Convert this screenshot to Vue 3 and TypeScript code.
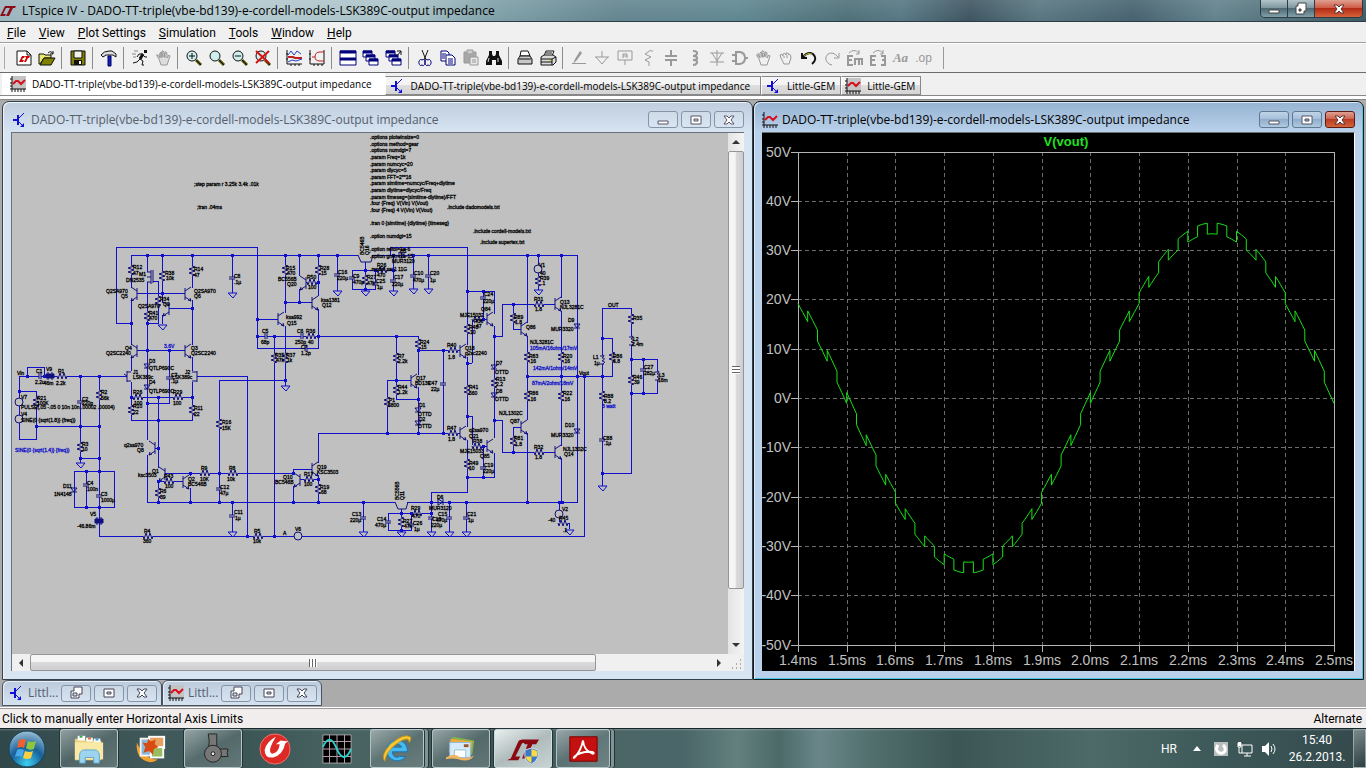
<script setup lang="ts">
type Shape = [d: string, fill: string, stroke?: string, width?: number]
type Tool = { name: string; shapes: Shape[] }

const docTitle = 'DADO-TT-triple(vbe-bd139)-e-cordell-models-LSK389C-output impedance'
const menus = ['File', 'View', 'Plot Settings', 'Simulation', 'Tools', 'Window', 'Help']

const N = 'none'
const K = '#111'
const B = '#00007a'
const G = '#999'

const chartIcon: Shape[] = [
  ['M2 0H16V13H2Z', '#c4c4c4'],
  ['M2 0V16M0 13H16M0 3H2M0 7H2M0 10H2M5 13V16M8 13V16M11 13V16M14 13V16', N, K, 1],
  ['M3 8L6 5H8L11 8L15 4', N, '#d8101c', 2],
]
const bjtIcon: Shape[] = [
  ['M2 7H6V9H2Z', '#1010d8'],
  ['M6 3H8V13H6Z', '#1010d8'],
  ['M8 6L13 1M8 10L13 15', N, '#1010d8', 1],
  ['M13 11V15H9Z', '#1010d8'],
]

const lens: Shape[] = [
  ['M6 1A5 5 0 1 0 6 11A5 5 0 1 0 6 1Z', '#cfeeee', K, 1],
  ['M10 10L15 15', N, '#555500', 3],
  ['M10 10L15 15', N, K, 1],
]
const cascade: Shape[] = [
  ['M0 1H9V7H0Z', '#fff', B, 1], ['M0 2H9', N, B, 3],
  ['M3 5H12V11H3Z', '#fff', B, 1], ['M3 6H12', N, B, 3],
  ['M6 9H15V15H6Z', '#fff', B, 1], ['M6 10H15', N, B, 3],
]
const hand = 'M4 9L2 6Q1 4 3 5L5 8V3Q6 1 7 3V7V1Q8 0 9 2V7L10 2Q11 1 12 3V8L14 5Q16 5 14 9L12 15H6Z'

const toolGroups: Tool[][] = [
  [
    { name: 'New schematic', shapes: [['M1 1H11L15 5V15H1Z', '#fff', K, 1], ['M11 1V5H15', N, K, 1], ['M3 12L6 6H9L8 8H7L6 10H8L7 12ZM9 6H14L13 8H12L10 12H8L10 8Z', '#d00000']] },
    { name: 'Open', shapes: [['M0 4H5L6 5H12V8H5L1 14H0Z', '#e8e870', K, 1], ['M1 15L5 8H16L12 15Z', '#808000', K, 1], ['M9 3Q12 0 14 4M14 1V4H11', N, K, 1]] },
  ],
  [{ name: 'Save', shapes: [['M1 1H15V15H1Z', '#808000', K, 1], ['M4 1H12V8H4Z', '#f2f2e6', K, 1], ['M4 10H12V15H4Z', '#111'], ['M9 11H11V14H9Z', '#fff']] }],
  [{ name: 'Control panel', shapes: [['M0 5Q3 1 8 1H11L15 4V7L12 5H5L2 7Z', '#ddd', K, 1], ['M7 6H10V16H7Z', '#1020c8', '#000060', 1]] }],
  [
    { name: 'Run', shapes: [['M12 0H15V3H12Z', K], ['M11 4L8 9', N, K, 3], ['M8 9L11 11L10 15H12M8 9L5 12L1 13M11 4H7L5 7M11 5L13 7H15', N, K, 1], ['M0 4H4M1 7H4M2 1H6', N, '#888', 1]] },
    { name: 'Halt', shapes: [[hand, '#ddd', G, 1], ['M5 8V3M7 8V2M10 8V3', N, G, 1]] },
  ],
  [
    { name: 'Zoom in', shapes: [...lens, ['M3 6H9M6 3V9', N, K, 1]] },
    { name: 'Zoom area', shapes: lens },
    { name: 'Zoom out', shapes: [...lens, ['M3 6H9', N, K, 1]] },
    { name: 'Zoom full', shapes: [...lens, ['M1 1L14 13M14 1L1 13', N, '#d81010', 2]] },
  ],
  [
    { name: 'Autorange', shapes: [['M1 0V14H16M0 4H2M0 9H2M5 14V16M9 14V16M13 14V16', N, K, 1], ['M2 5L5 1L8 5L11 1L15 4', N, '#2040c0', 1], ['M2 7H7L9 8H16', N, '#c02020', 2], ['M2 12L6 10L10 11L16 9', N, '#2040c0', 1]] },
    { name: 'Pick traces', shapes: [['M1 0V14H15V0M0 4H2M0 9H2M5 14V16M9 14V16M13 14V16', N, K, 1], ['M15 2H11Q6 2 6 7Q6 11 11 11H15M6 7H3', N, '#c02020', 1]] },
  ],
  [
    { name: 'Tile', shapes: [['M0 1H16V15H0Z', '#fff', B, 1], ['M0 2H16M0 9H16', N, B, 3]] },
    { name: 'Cascade', shapes: cascade },
    { name: 'Close all', shapes: [...cascade, ['M11 6L15 1M11 1H15V5', N, K, 1]] },
  ],
  [
    { name: 'Cut', shapes: [['M5 0L9 10M11 0L7 10', N, K, 1], ['M5 10A2 3 0 1 0 5 15A2 3 0 1 0 5 10ZM11 10A2 3 0 1 0 11 15A2 3 0 1 0 11 10Z', N, B, 1]] },
    { name: 'Copy', shapes: [['M1 1H7L9 3V11H1Z', '#fff', B, 1], ['M6 5H12L15 8V15H6Z', '#fff', B, 1], ['M2 4H6M2 6H5M2 8H5M8 9H13M8 11H13M8 13H13', N, B, 1]] },
    { name: 'Paste', shapes: [['M1 2H13V13H1Z', '#a8a8a8', G, 1], ['M4 0H10V4H4Z', '#ccc', G, 1], ['M7 7H15V15H7Z', '#e6e6e6', G, 1], ['M9 10H13M9 12H13', N, G, 1]] },
    { name: 'Find', shapes: [['M3 1H6V4L7 6H9L10 4V1H13V5L16 11V15H10V10H6V15H0V11L3 5Z', K], ['M3 8L2 12M12 8V12', N, '#ddd', 1]] },
  ],
  [
    { name: 'Print preview', shapes: [['M4 1H11L13 6H3Z', '#fff', K, 1], ['M3 6H13L15 9V14H1V9Z', '#c8c8c8', K, 1], ['M2 9H14', N, K, 1]] },
    { name: 'Print', shapes: [['M6 1H14L12 6H4Z', '#fff', K, 1], ['M1 7L4 5H13L16 7V12L13 15H1Z', '#ddd', K, 1], ['M1 9H12L16 7M1 12H12M12 9V15M6 3H12', N, K, 1], ['M9 10H11V11H9Z', '#dd0']] },
  ],
  [
    { name: 'Wire', shapes: [['M2 14L4 9L9 1L11 3L6 10ZM1 13H15V14H1Z', G]] },
    { name: 'Ground', shapes: [['M8 1V7M1 7H15M2 7L8 14L14 7', N, G, 1]] },
    { name: 'Label net', shapes: [['M1 1H15V10H1ZM8 10V15', N, G, 1], ['M6 8V4H10V8M6 6H10', N, G, 1]] },
    { name: 'Resistor', shapes: [['M11 0L5 4L11 7L5 10L9 12V16M11 1H13', N, G, 1]] },
    { name: 'Capacitor', shapes: [['M8 0V6M8 10V16M2 6H14M2 10H14', N, G, 2]] },
    { name: 'Inductor', shapes: [['M7 1Q12 1 11 4Q10 6 7 6Q12 6 11 9Q10 10 7 10Q12 10 11 13Q10 15 7 15', N, G, 2]] },
    { name: 'Diode', shapes: [['M1 3H15M1 12H15M8 0V16M3 3L8 11L13 3', N, G, 1]] },
    { name: 'Component', shapes: [['M0 5H3M0 11H3M13 8H16M4 2H8Q13 3 13 8Q13 13 8 14H4Z', N, G, 2]] },
    { name: 'Move', shapes: [[hand, N, G, 1], ['M5 8L3 3M8 8L7 3M10 7L11 3', N, G, 1]] },
    { name: 'Drag', shapes: [['M3 8L2 5Q4 3 5 6V4Q7 2 8 5V3Q10 2 11 5V4Q13 4 13 8L11 14H6Z', N, G, 1], ['M6 8V6M9 8V5', N, G, 1]] },
    { name: 'Undo', shapes: [['M1 3V8H6', N, K, 2], ['M2 7Q7 1 12 4Q17 9 11 14', N, K, 2], ['M3 6Q7 2 11 4', N, '#b8b830', 1]] },
    { name: 'Redo', shapes: [['M15 3V8H10M14 7Q9 1 4 4Q-1 9 5 14L8 15', N, G, 1]] },
    { name: 'Rotate', shapes: [['M2 3Q7 -2 12 3M12 0V4H9', N, G, 1], ['M6 6H1V15H6M1 10H5M8 15V9H15V15M12 9V15', N, G, 2]] },
    { name: 'Mirror', shapes: [['M3 3Q8 -2 13 3M13 0V4H10', N, G, 1], ['M6 6H1V15H6M1 10H5M11 6H15V15H11M15 10H12', N, G, 2]] },
    { name: 'Text', shapes: [] },
    { name: 'SPICE directive', shapes: [] },
  ],
]

const letters: Record<string, string> = { Text: 'Aa', 'SPICE directive': '.op' }

const tabs = [
  { text: docTitle, icon: chartIcon, active: true },
  { text: docTitle, icon: bjtIcon, active: false },
  { text: 'Little-GEM', icon: bjtIcon, active: false },
  { text: 'Little-GEM', icon: chartIcon, active: false },
]

/* Schematic */
const wires = [
  'M131 323H116V247H257V348H318V309M131 255H358M372 255H577V502H407M131 255V288M131 300V345M131 357V371M131 382V420H192V382',
  'M137 293H185M137 350H185M147 255V272M147 282V440M147 455V502H395M147 323H158V281H153M162 255V303M169 308H192M162 315V324',
  'M192 255V288M192 300V345M192 357V371M131 397H192M158 397V468M155 448H158M147 403H169V350M232 255V293M232 502V532',
  'M19 376H127M27 376V367H44V376M19 376V439H36V391H19M36 426H99M80 376V463M80 458H99M99 376V536H584V376M74 471H114V507H74ZM86 471V507',
  'M197 376H247V536M219 502V380H285M165 473H293V469H312M158 480V502M158 481H183M190 473V476M190 488V502',
  'M285 255V313M285 326V386M257 319H278M299 255V276M299 289V302M306 282H318M285 302H312M318 255V296M257 336H418V375M274 336V536',
  'M337 255V291M365 262V291M352 289V270H393M352 289H375V270M393 255V291M390 255V247H467V345M413 255V289M428 255V289',
  'M467 291H494V314M483 291V319M472 363V319H487M467 363H472M494 326V438M494 336H502V304H555M418 350H460M467 357V427M443 350V433',
  'M396 336V399H418M387 433V380H411M418 387V433M318 463V433H460M467 440V492H431V532M467 477H494V453M467 416H472V446H487M483 446V477',
  'M494 420H502V452H555M293 486V502M300 479H318M318 475V502M363 502V532M401 509V532M388 530V513H431M388 530H411V513M449 502V532M466 502V532',
  'M527 255V323M527 336V420M527 433V502M513 304V329H521M513 452V427H521M538 255V290M561 255V298M561 311V446M561 458V502',
  'M527 376H612V338H602M631 308V473H602M602 308H631M602 308V487M631 359H657V393H631M643 359V393M559 502V523M569 523V529M559 523H569',
].join('')

const nodes: number[][] = [
  [147,255],[162,255],[192,255],[232,255],[285,255],[299,255],[318,255],[337,255],[393,255],[413,255],[428,255],[527,255],[538,255],[561,255],
  [162,293],[192,308],[131,323],[147,323],[147,350],[169,350],[131,397],[158,397],[192,397],[158,420],[147,403],[158,448],[19,391],[27,376],[44,376],[80,376],[99,376],
  [36,426],[80,426],[99,426],[80,458],[99,458],[99,471],[86,471],[86,507],[99,507],[158,481],[190,473],[219,473],[158,502],[190,502],[219,502],[232,502],[247,536],
  [257,319],[257,336],[274,336],[285,302],[299,302],[318,282],[318,336],[396,336],[365,270],[375,270],[393,270],[365,289],[467,291],[483,291],[483,319],[494,336],[467,363],
  [418,350],[443,350],[396,380],[418,399],[387,433],[418,433],[443,433],[285,380],[467,416],[467,477],[483,477],[483,446],[494,420],[513,452],[513,304],[293,473],[318,479],
  [293,502],[318,502],[363,502],[431,502],[449,502],[466,502],[401,513],[411,513],[431,513],[401,530],[527,376],[561,376],[577,376],[584,376],[602,376],[602,338],[631,359],
  [643,359],[631,393],[643,393],[527,502],[559,502],[562,502],[602,473],[274,536],
]
const resV: number[][] = [
  [131,270],[162,276],[192,271],[147,316],[158,301],[36,402],[99,395],[131,410],[192,410],[80,447],[158,493],[219,424],[285,270],[318,270],[274,358],[285,358],[365,280],
  [396,358],[396,390],[387,402],[418,344],[467,329],[467,390],[467,464],[494,383],[318,489],[401,522],[513,318],[527,357],[561,357],[527,396],[561,396],[513,441],
  [538,281],[602,396],[612,357],[631,319],[631,380],
]
const resH: number[][] = [
  [62,376],[138,397],[178,397],[169,481],[205,473],[233,473],[148,536],[258,536],[312,282],[311,336],[382,270],[453,350],[453,433],[477,319],[477,446],[309,479],[417,513],
  [539,304],[539,452],[563,523],
]
const caps: number[][] = [
  [169,378],[232,278],[80,402],[86,485],[99,496],[219,489],[232,516],[337,275],[352,278],[375,284],[393,281],[413,276],[428,276],[483,298],[443,384],[483,468],[363,518],
  [388,522],[411,525],[431,518],[449,518],[466,518],[643,370],[602,440],
]
const capsH: number[][] = [[40,376],[266,336],[302,336],[306,348]]
const diodes: number[][] = [[147,366],[147,387],[74,490],[418,410],[418,423],[494,367],[494,395],[577,326],[577,431]]
const inductors: number[][] = [[602,360],[631,341],[657,376]]
const grounds: number[][] = [
  [162,325],[232,293],[80,463],[232,532],[285,386],[337,291],[365,291],[393,291],[413,289],[428,289],[538,290],[363,532],[401,532],[431,532],[449,532],[466,532],[602,486],[569,530],
]
/* base bar x, centre y, side of the collector and emitter leads */
const bjts: number[][] = [
  [137,294,-1],[185,294,1],[137,351,-1],[185,351,1],[169,309,-1],[155,448,-1],[165,474,-1],[183,482,1],[278,319,1],[306,283,-1],[312,303,1],[460,351,1],[460,433,1],[487,319,1],
  [487,446,1],[411,381,1],[312,469,1],[300,480,-1],[521,329,1],[555,304,1],[521,427,1],[555,452,1],
]
const sources: number[][] = [[19,402],[19,419],[298,536],[538,269],[559,514]]
const flats: number[][] = [[50,376],[99,521]]

const labels: [number, number, string][] = [
  [370,139,'.options plotwinsize=0'],[370,146,'.options method=gear'],[370,152,'.options numdgt=7'],[370,159,'.param Freq=1k'],[370,166,'.param numcyc=20'],[370,172,'.param dlycyc=5'],
  [370,179,'.param FFT=2**16'],[370,185,'.param simtime=numcyc/Freq+dlytime'],[370,192,'.param dlytime=dlycyc/Freq'],[370,199,'.param timeseg=(simtime-dlytime)/FFT'],
  [370,205,'.four {Freq} V(Vin) V(Vout)'],[370,212,'.four {Freq} 4 V(Vin) V(Vout)'],[370,225,'.tran 0 {simtime} {dlytime} {timeseg}'],[370,238,'.option numdgt=15'],
  [370,251,'.option reltol=1e-6'],[370,258,'.option gmin=1e-15'],[370,271,'.model sw 1 11G'],[447,209,'.include dadomodels.txt'],[473,233,'.include cordell-models.txt'],[480,244,'.include supertex.txt'],
  [194,186,';step param r 3.25k 3.4k .01k'],[197,209,';tran .04ms'],
  [133,269,'R12'],[133,275,'47'],[139,276,'M1'],[126,282,'DN2535'],[165,275,'R38'],[166,280,'10k'],[194,271,'R14'],[194,277,'47'],[106,293,'Q2SA970'],[121,298,'Q5'],
  [194,293,'Q2SA970'],[194,298,'Q6'],[160,301,'R34'],[163,306,'Q9'],[138,308,'Q2SA970'],[149,315,'R41'],[149,320,'470'],[234,278,'C8'],[234,284,'.1µ'],
  [125,350,'Q4'],[106,355,'Q2SC2240'],[191,350,'Q3'],[191,355,'Q2SC2240'],[149,363,'D3'],[149,370,'QTLP690C'],[133,374,'J1'],[133,379,'LSK389c'],[172,379,'LSK389c'],[185,374,'J2'],
  [171,377,'C7'],[171,383,'.1µ'],[149,384,'D4'],[149,393,'QTLP690C'],[133,394,'R26'],[134,405,'100'],[173,394,'R29'],[173,405,'100'],[133,408,'R10'],[133,414,'22'],[194,410,'R11'],[194,416,'22'],
  [17,375,'Vin'],[36,373,'C1'],[46,371,'V9'],[58,373,'R1'],[35,384,'2.2u'],[42,385,'-46m'],[56,385,'2.2k'],[37,400,'R21'],[37,405,'100K'],[21,399,'V7'],[21,409,'PULSE(.05 -.05 0 10n 10n .00002 .00004)'],
  [21,416,'V4'],[21,422,'SINE(0 {sqrt(1.8)} {freq})'],[82,401,'C2'],[82,405,'220p'],[101,394,'R2'],[101,400,'56k'],[82,446,'R3'],[82,451,'10'],
  [63,488,'D11'],[54,496,'1N4148'],[87,485,'C4'],[87,491,'100n'],[101,496,'C3'],[101,502,'1000µ'],[90,516,'V5'],[77,528,'-46.86m'],[144,533,'R4'],[143,543,'360'],
  [124,447,'q2sa970'],[137,452,'Q8'],[152,473,'Q1'],[138,477,'ksc3503'],[164,478,'R43'],[165,488,'100'],[188,481,'Q2'],[188,486,'BC546B'],[160,493,'R6'],[160,499,'39'],
  [201,470,'R9'],[200,481,'10K'],[229,470,'R8'],[227,481,'10k'],[222,424,'R16'],[222,430,'15K'],[220,489,'C12'],[220,495,'47µ'],[234,514,'C11'],[235,520,'1µ'],
  [254,533,'R5'],[253,543,'10k'],[283,535,'A'],[295,531,'V6'],[286,270,'R15'],[287,275,'470'],[278,281,'BC556B'],[287,286,'Q20'],[307,279,'R50'],[308,289,'100'],
  [320,270,'R28'],[321,275,'15'],[321,302,'ksa1381'],[322,307,'Q12'],[286,319,'ksa992'],[287,325,'Q15'],[262,333,'C5'],[261,344,'68p'],[297,333,'C6'],[306,333,'R36'],[295,344,'250p'],[308,344,'40'],
  [301,349,'C7'],[301,355,'1.2p'],[275,357,'R35'],[286,357,'R37'],[276,362,'47k'],[287,362,'1k'],[338,274,'C16'],[337,280,'220µ'],[353,278,'C9'],[353,284,'470µ'],[367,279,'R27'],[367,285,'47k'],
  [376,283,'C25'],[377,289,'1µ'],[377,267,'R26'],[377,277,'470'],[394,279,'C17'],[392,286,'220µ'],[392,263,'MUR3120'],[400,253,'D5'],[414,275,'C10'],[413,282,'470µ'],[430,275,'C20'],[430,282,'1µ'],
  [398,358,'R7'],[398,363,'2.2k'],[420,344,'R24'],[421,349,'15'],[447,347,'R40'],[448,359,'1.8'],[465,350,'Q18'],[465,355,'q2sc2240'],[469,329,'R48'],[470,334,'10'],
  [484,296,'C24'],[483,303,'220µ'],[481,311,'Q84'],[460,317,'MJE15032'],[474,323,'R30'],[476,328,'47'],[398,389,'R44'],[398,394,'1.2k'],[416,380,'Q17'],[415,385,'BD139'],[428,385,'C47'],[431,391,'22µ'],
  [389,402,'P1'],[388,407,'5800'],[419,407,'D1'],[418,416,'OTTD'],[419,421,'D2'],[418,428,'OTTD'],[469,389,'R41'],[469,395,'560'],[447,430,'R47'],[448,441,'1.8'],
  [469,432,'q2sa970'],[469,438,'Q21'],[473,443,'R38'],[460,453,'MJE15033'],[480,458,'Q85'],[469,465,'R49'],[469,470,'10'],[484,467,'C19'],[483,473,'220µ'],
  [496,365,'D7'],[495,374,'OTTD'],[496,381,'R13'],[496,386,'2.2'],[496,393,'D8'],[495,401,'OTTD'],[317,469,'Q19'],[317,474,'KSC3503'],[283,479,'Q10'],[275,484,'BC546B'],[304,476,'R17'],[304,486,'100'],
  [320,489,'R19'],[321,494,'68'],[352,516,'C13'],[350,522,'220µ'],[377,521,'C14'],[375,527,'470µ'],[403,523,'R27'],[404,528,'47k'],[411,510,'R29'],[412,518,'470'],[413,525,'C26'],[414,531,'1µ'],
  [437,499,'D6'],[429,510,'MUR3120'],[432,521,'C18'],[431,527,'220µ'],[438,516,'C15'],[436,522,'470µ'],[467,516,'C21'],[468,522,'1µ'],[539,267,'V1'],[540,275,'40'],[540,280,'R39'],[541,285,'.1'],
  [534,301,'R31'],[535,311,'1.8'],[560,304,'Q13'],[560,309,'NJL3281C'],[514,319,'R89'],[515,324,'1.8'],[526,329,'Q86'],[530,344,'NJL3281C'],[568,322,'D9'],[551,331,'MUR3320'],
  [529,358,'R83'],[529,363,'.16'],[563,358,'R20'],[563,363,'.16'],[529,395,'R86'],[529,401,'.16'],[563,395,'R22'],[563,401,'.16'],[579,375,'Vout'],[593,359,'L1'],[594,365,'1µ'],[613,358,'R86'],[613,363,'6.8'],
  [608,307,'OUT'],[633,320,'R35'],[633,341,'L2'],[632,346,'2.4m'],[633,379,'R46'],[634,384,'39'],[644,369,'C27'],[644,375,'282µ'],[659,377,'L3'],[658,382,'16m'],[604,398,'R88'],[604,403,'8.2'],
  [603,440,'C88'],[604,445,'.1µ'],[499,415,'NJL1302C'],[510,423,'Q87'],[514,440,'R81'],[515,446,'1.8'],[534,449,'R32'],[535,459,'1.8'],[565,427,'D10'],[551,437,'MUR3320'],[563,451,'NJL1302C'],[564,456,'Q14'],
  [562,511,'V2'],[548,522,'-40'],[559,520,'R45'],[563,532,'.1'],
]
const blueLabels: [number, number, string][] = [
  [530,350,'105mA/16ohm/17mV'],[533,370,'142mA/1ohm/14mV'],[532,385,'87mA/2ohm/18mV'],[164,348,'3.6V'],[15,452,'SINE(0 {sqrt(1.4)} {freq})'],[602,408,'3 watt'],
]
const upright: [number, number, string][] = [[364,255,'BC546B'],[369,255,'Q16'],[399,500,'BC556B'],[404,500,'Q11']]

/* Waveform: 1 kHz sine with a 25 kHz square ripple */
const xOf = (ms: number) => 798 + ((ms - 1.4) / 1.1) * 536
const yOf = (v: number) => 398 - v * 4.93
const trace = (() => {
  const pts: string[] = []
  const half = 0.02
  for (let k = 0; k < 55; k++) {
    const level = k % 2 === 0 ? -1.1 : 1.1
    for (let s = 0; s <= 4; s++) {
      const t = 1.4 + k * half + (s / 4) * half
      const v = -34.4 * Math.sin(2 * Math.PI * (t - 1.5)) + level
      pts.push(`${xOf(t).toFixed(1)},${yOf(v).toFixed(1)}`)
    }
  }
  return pts.join(' ')
})()
const volts = [50, 40, 30, 20, 10, 0, -10, -20, -30, -40, -50]
const times = Array.from({ length: 12 }, (_, i) => 1.4 + i / 10)

const minimized = [{ icon: bjtIcon }, { icon: chartIcon }]
</script>

<template>
  <div class="desktop">
    <header class="titlebar">
      <svg class="logo" viewBox="0 0 16 12" aria-hidden="true"><path d="M0 11L5 1H9L8 3H6L3 9H6L5 11ZM8 1H16L15 3H13L9 11H6L10 3H7Z" fill="#8c0c18" /></svg>
      <h1>LTspice IV - {{ docTitle }}</h1>
      <div class="caption-buttons">
        <button type="button" aria-label="Minimize"><svg viewBox="0 0 14 14"><path d="M2 8H12V11H2Z" fill="#fff" stroke="#444" /></svg></button>
        <button type="button" aria-label="Restore"><svg viewBox="0 0 14 14"><path d="M4 1H12V9H10V12H2V4H4Z" fill="#fff" stroke="#444" /><path d="M5 7H7V9H5Z" fill="#667" stroke="#444" /></svg></button>
        <button type="button" class="close" aria-label="Close"><svg viewBox="0 0 14 14"><path d="M2 3H5L7 5L9 3H12L9 7L12 11H9L7 9L5 11H2L5 7Z" fill="#fff" stroke="#533" /></svg></button>
      </div>
    </header>

    <nav class="menubar" aria-label="Main menu">
      <button v-for="m in menus" :key="m" type="button"><u>{{ m[0] }}</u>{{ m.slice(1) }}</button>
    </nav>

    <div class="toolbar" role="toolbar" aria-label="Tools">
      <div v-for="(group, gi) in toolGroups" :key="gi" class="group">
        <button v-for="t in group" :key="t.name" type="button" :aria-label="t.name">
          <span v-if="letters[t.name]" class="letters" :class="{ italic: t.name === 'Text' }">{{ letters[t.name] }}</span>
          <svg v-else viewBox="0 0 16 16"><path v-for="(s, i) in t.shapes" :key="i" :d="s[0]" :fill="s[1]" :stroke="s[2] ?? 'none'" :stroke-width="s[3] ?? 0" /></svg>
        </button>
      </div>
    </div>

    <div class="tabs" role="tablist">
      <button v-for="(t, i) in tabs" :key="i" type="button" role="tab" :aria-selected="t.active" :class="{ active: t.active, long: t.text === docTitle }">
        <svg viewBox="0 0 16 16"><path v-for="(s, j) in t.icon" :key="j" :d="s[0]" :fill="s[1]" :stroke="s[2] ?? 'none'" :stroke-width="s[3] ?? 0" /></svg>
        <span>{{ t.text }}</span>
      </button>
    </div>

    <main class="mdi">
      <div class="windows">
        <section class="win schematic-win">
          <header>
            <svg class="win-icon" viewBox="0 0 16 16"><path v-for="(s, j) in bjtIcon" :key="j" :d="s[0]" :fill="s[1]" :stroke="s[2] ?? 'none'" :stroke-width="s[3] ?? 0" /></svg>
            <h2>{{ docTitle }}</h2>
            <div class="win-buttons">
              <button type="button" aria-label="Minimize"><svg viewBox="0 0 14 14"><path d="M2 8H12V11H2Z" fill="#fff" stroke="#556" /></svg></button>
              <button type="button" aria-label="Maximize"><svg viewBox="0 0 14 14"><path d="M2 3H12V11H2ZM5 6V8H9V6Z" fill="#fff" fill-rule="evenodd" stroke="#556" /></svg></button>
              <button type="button" aria-label="Close"><svg viewBox="0 0 14 14"><path d="M2 3H5L7 5L9 3H12L9 7L12 11H9L7 9L5 11H2L5 7Z" fill="#fff" stroke="#556" /></svg></button>
            </div>
          </header>
          <div class="pane">
            <div class="canvas">
              <svg class="schematic" viewBox="12 133 716 520" role="img" aria-label="Amplifier schematic">
                <path class="wire" :d="wires" />
                <g class="sym">
                  <g v-for="(r, i) in resV" :key="'v' + i" :transform="`translate(${r[0]} ${r[1]})`"><path class="gap" d="M-1 -5H1V5H-1Z" /><path d="M0 -5L3 -4L-3 -2L3 0L-3 2L3 4L0 5" /></g>
                  <g v-for="(r, i) in resH" :key="'h' + i" :transform="`translate(${r[0]} ${r[1]}) rotate(90)`"><path class="gap" d="M-1 -5H1V5H-1Z" /><path d="M0 -5L3 -4L-3 -2L3 0L-3 2L3 4L0 5" /></g>
                  <g v-for="(c, i) in caps" :key="'c' + i" :transform="`translate(${c[0]} ${c[1]})`"><path class="gap" d="M-1 -1H1V1H-1Z" /><path d="M-3 -1H3M-3 1H3" /></g>
                  <g v-for="(c, i) in capsH" :key="'ch' + i" :transform="`translate(${c[0]} ${c[1]})`"><path class="gap" d="M-1 -1H1V1H-1Z" /><path d="M-1 -3V3M1 -3V3" /></g>
                  <g v-for="(d, i) in diodes" :key="'d' + i" :transform="`translate(${d[0]} ${d[1]})`"><path d="M-3 -2H3L0 2ZM-3 2H3" /></g>
                  <path d="M399 252V258L404 255ZM404 252V258M438 499V505L443 502ZM443 499V505" />
                  <g v-for="(l, i) in inductors" :key="'l' + i" :transform="`translate(${l[0]} ${l[1]})`"><path class="gap" d="M-1 -5H1V5H-1Z" /><path d="M0 -5Q4 -5 0 -2Q5 -2 0 1Q5 1 0 5M-2 -4H2M-2 4H2" /></g>
                  <g v-for="(b, i) in bjts" :key="'b' + i" :transform="`translate(${b[0]} ${b[1]}) scale(${b[2]} 1)`"><path d="M0 -6V6M0 -3L6 -7M0 3L6 7M3 6L6 7L5 4" /></g>
                  <path d="M127 371V382M127 372H131M127 381H131M124 374L127 376M197 371V382M192 372H197M192 381H197M153 270V283M147 272H151M147 277H151M147 282H151M151 270V284M358 255L361 262H371L373 255M395 502L398 509H406L408 502" />
                  <g v-for="(s, i) in sources" :key="'s' + i"><circle :cx="s[0]" :cy="s[1]" r="4" class="source" /></g>
                  <path v-for="(f, i) in flats" :key="'f' + i" :d="`M${f[0] - 4} ${f[1] - 2}h8v4h-8ZM${f[0] - 2} ${f[1] - 4}v8M${f[0] + 2} ${f[1] - 4}v8`" class="solid" />
                </g>
                <path v-for="(g, i) in grounds" :key="'g' + i" class="ground" :d="`M${g[0] - 4} ${g[1]}h9l-4 5Z`" />
                <rect v-for="(n, i) in nodes" :key="'n' + i" class="node" :x="n[0] - 1" :y="n[1] - 1" width="3" height="3" />
                <text v-for="(l, i) in labels" :key="'t' + i" :x="l[0]" :y="l[1]">{{ l[2] }}</text>
                <text v-for="(l, i) in blueLabels" :key="'u' + i" class="blue" :x="l[0]" :y="l[1]">{{ l[2] }}</text>
                <text v-for="(l, i) in upright" :key="'r' + i" :transform="`translate(${l[0]} ${l[1]}) rotate(-90)`">{{ l[2] }}</text>
              </svg>
            </div>
            <div class="vbar">
              <button type="button" aria-label="Scroll up"><svg viewBox="0 0 8 8"><path d="M0 6L4 2L8 6Z" fill="#333" /></svg></button>
              <div class="track"><div class="thumb"></div><div class="rest"></div></div>
              <button type="button" aria-label="Scroll down"><svg viewBox="0 0 8 8"><path d="M0 2H8L4 6Z" fill="#333" /></svg></button>
            </div>
            <div class="hbar">
              <button type="button" aria-label="Scroll left"><svg viewBox="0 0 8 8"><path d="M6 0V8L2 4Z" fill="#333" /></svg></button>
              <div class="track"><div class="thumb"></div><div class="rest"></div></div>
              <button type="button" aria-label="Scroll right"><svg viewBox="0 0 8 8"><path d="M2 0V8L6 4Z" fill="#333" /></svg></button>
            </div>
            <svg class="grip" viewBox="0 0 16 17"><path d="M12 5h1v2h-1zM12 9h1v2h-1zM8 9h1v2h-1zM12 13h1v2h-1zM8 13h1v2h-1zM4 13h1v2h-1z" fill="#aaa" /></svg>
          </div>
        </section>

        <section class="win plot-win">
          <header>
            <svg class="win-icon" viewBox="0 0 16 16"><path v-for="(s, j) in chartIcon.slice(1)" :key="j" :d="s[0]" :fill="s[1]" :stroke="s[2]" :stroke-width="s[3]" /></svg>
            <h2>{{ docTitle }}</h2>
            <div class="win-buttons">
              <button type="button" aria-label="Minimize"><svg viewBox="0 0 14 14"><path d="M2 8H12V11H2Z" fill="#fff" stroke="#556" /></svg></button>
              <button type="button" aria-label="Maximize"><svg viewBox="0 0 14 14"><path d="M2 3H12V11H2ZM5 6V8H9V6Z" fill="#fff" fill-rule="evenodd" stroke="#556" /></svg></button>
              <button type="button" class="close" aria-label="Close"><svg viewBox="0 0 14 14"><path d="M2 3H5L7 5L9 3H12L9 7L12 11H9L7 9L5 11H2L5 7Z" fill="#fff" stroke="#533" /></svg></button>
            </div>
          </header>
          <div class="plot-pane">
            <svg class="plot" viewBox="762 133 592 538" role="img" aria-label="V(vout) against time">
              <g class="grid">
                <path v-for="v in volts.slice(1, -1)" :key="v" :d="`M798 ${Math.round(yOf(v))}H1334`" />
                <path v-for="t in times.slice(1, -1)" :key="t" :d="`M${Math.round(xOf(t))} 152V645`" />
              </g>
              <g class="axis">
                <path d="M798 152H1334V645H798Z" />
                <path v-for="v in volts" :key="v" :d="`M791 ${Math.round(yOf(v))}h7`" />
                <path v-for="t in times" :key="t" :d="`M${Math.round(xOf(t))} 645v7`" />
              </g>
              <text v-for="v in volts" :key="'v' + v" x="791" :y="Math.round(yOf(v)) + 5" text-anchor="end">{{ v }}V</text>
              <text v-for="t in times" :key="'t' + t" :x="Math.round(xOf(t))" y="665" text-anchor="middle">{{ t.toFixed(1) }}ms</text>
              <text class="trace-name" x="1066" y="146" text-anchor="middle">V(vout)</text>
              <polyline class="trace" :points="trace" />
            </svg>
          </div>
        </section>
      </div>

      <div class="minimized">
        <div v-for="(m, i) in minimized" :key="i" class="mini">
          <svg class="win-icon" viewBox="0 0 16 16"><path v-for="(s, j) in m.icon" :key="j" :d="s[0]" :fill="s[1]" :stroke="s[2] ?? 'none'" :stroke-width="s[3] ?? 0" /></svg>
          <span>Littl...</span>
          <div class="win-buttons">
            <button type="button" aria-label="Restore"><svg viewBox="0 0 14 14"><path d="M5 1H13V8H10V12H2V5H5ZM4 7V10H8V7Z" fill="#fff" fill-rule="evenodd" stroke="#445" /></svg></button>
            <button type="button" aria-label="Maximize"><svg viewBox="0 0 14 14"><path d="M2 3H12V11H2ZM5 6V8H9V6Z" fill="#fff" fill-rule="evenodd" stroke="#445" /></svg></button>
            <button type="button" aria-label="Close"><svg viewBox="0 0 14 14"><path d="M2 3H5L7 5L9 3H12L9 7L12 11H9L7 9L5 11H2L5 7Z" fill="#fff" stroke="#445" /></svg></button>
          </div>
        </div>
      </div>
    </main>

    <div class="status"><span>Click to manually enter Horizontal Axis Limits</span><span>Alternate</span></div>

    <footer class="taskbar">
      <button type="button" class="start" aria-label="Start">
        <svg viewBox="0 0 38 38">
          <defs><radialGradient id="orb" cx=".5" cy=".9" r=".9"><stop offset="0" stop-color="#3fd0f0" /><stop offset=".5" stop-color="#17609a" /><stop offset="1" stop-color="#9cc0d4" /></radialGradient></defs>
          <circle cx="19" cy="19" r="18" fill="url(#orb)" stroke="#17405c" />
          <path d="M11 10Q15 8 18 10L16 18Q13 16 9 18Z" fill="#ee6030" /><path d="M20 11Q24 13 28 11L26 19Q22 21 18 18Z" fill="#8cc63c" />
          <path d="M9 20Q12 18 16 20L14 27Q11 25 7 27Z" fill="#48a8e8" /><path d="M17 21Q21 23 25 21L23 28Q19 30 15 28Z" fill="#fcd040" />
        </svg>
      </button>
      <button type="button" class="task open" aria-label="Explorer">
        <svg viewBox="0 0 34 34"><path d="M2 6H12L13 8H30V29H2Z" fill="#e9d27e" /><path d="M5 3H13V8H5Z" fill="#fff" /><path d="M7 3H10V5H7Z" fill="#3a4" /><path d="M14 5H21V9H14Z" fill="#fff" /><path d="M16 5H19V7H16Z" fill="#e63" /><path d="M22 6H29V10H22Z" fill="#fff" /><path d="M24 6H27V8H24Z" fill="#39d" /><path d="M2 10H32V28H2Z" fill="#f8eaa6" /><path d="M7 32V23Q8 18 12 18H23Q27 18 28 23V32H22V26H13V32Z" fill="#9fd4f0" stroke="#5aa4cc" /></svg>
      </button>
      <button type="button" class="task" aria-label="Photo gallery">
        <svg viewBox="0 0 34 34"><path d="M2 10Q0 28 16 31Q22 31 24 28Q10 28 2 10Z" fill="#f0a030" /><path d="M5 5H22V25H5Z" fill="#f4f4f0" /><path d="M7 7H21V23H7Z" fill="#89b8dc" /><path d="M14 3H32V17H14Z" fill="#fff" /><path d="M16 5H30V15H16Z" fill="#e8a060" /><path d="M16 14H31V27H16Z" fill="#fff" /><path d="M18 16H29V25H18Z" fill="#98bc60" /><path d="M14 6L17 9L22 7L21 12L25 15L20 17L19 23L15 19L9 21L11 15L8 10L13 11Z" fill="#d84a10" /></svg>
      </button>
      <button type="button" class="task open" aria-label="Joint tool">
        <svg viewBox="0 0 34 34"><path d="M12 1H21V17H33Q31 21 33 25H18V18H12Q14 9 12 1Z" fill="#777" stroke="#222" /><circle cx="17" cy="22" r="9" fill="#777" stroke="#222" /><circle cx="17" cy="22" r="2" fill="#eee" stroke="#111" /></svg>
      </button>
      <button type="button" class="task" aria-label="Antivirus">
        <svg viewBox="0 0 34 34"><circle cx="17" cy="17" r="16" fill="#de2a26" stroke="#f37a70" /><path d="M18 4Q8 9 6 18Q6 27 15 26Q25 24 28 11L31 9L23 8L18 12H22Q21 21 14 22Q8 20 18 4Z" fill="#fff" /></svg>
      </button>
      <button type="button" class="task" aria-label="Oscilloscope">
        <svg viewBox="0 0 34 34"><path d="M2 2H32V32H2Z" fill="#000" stroke="#aaa" /><path d="M9 2V32M17 2V32M25 2V32M2 9H32M2 17H32M2 25H32" stroke="#c4a8b4" fill="none" /><path d="M2 15Q9 -1 16 15Q24 35 32 17" fill="none" stroke="#28d0c8" stroke-width="2" /></svg>
      </button>
      <button type="button" class="task open stack" aria-label="Internet Explorer">
        <svg viewBox="0 0 34 34"><path d="M28 20A11 11 0 1 0 26 25H20Q13 28 12 20ZM12 15Q17 8 22 15Z" fill="#45b8ee" fill-rule="evenodd" stroke="#1672b8" /><path d="M4 30Q-1 24 10 12Q24 0 31 4Q33 6 30 10Q30 4 22 8Q8 16 5 26Z" fill="#f6c832" stroke="#c89018" /></svg>
      </button>
      <button type="button" class="task open mail" aria-label="Mail">
        <svg viewBox="0 0 34 34"><path d="M8 4L31 8L29 23L6 19Z" fill="#7fb44c" /><path d="M6 6L29 9L27 24L4 20Z" fill="#f2a83a" /><path d="M5 10H27V26H5Z" fill="#d6ebfa" stroke="#8ab8dc" /><path d="M20 12H25V15H20Z" fill="#96582a" /><path d="M10 18H22V26H10Z" fill="#fff" stroke="#9bc" /><path d="M1 26Q10 20 16 26Q24 28 31 24Q26 32 14 28Q8 26 1 28Z" fill="#efb460" /></svg>
      </button>
      <button type="button" class="task open current" aria-label="LTspice IV">
        <svg viewBox="0 0 34 34"><path d="M0 29L4 27L12 9Q13 7 16 7H20L17 11H16L9 25H14L12 29ZM15 7H34L31 12H27L20 27L16 27L22 12H19Z" fill="#8a0a14" /><path d="M19 18L26 16L33 18V25Q31 31 26 33Q20 31 19 25Z" fill="#3c78c8" stroke="#dde" /><path d="M26 17L32 19V25H26ZM20 25H26V32Q21 30 20 25Z" fill="#f8dc40" /></svg>
      </button>
      <button type="button" class="task open adobe stack" aria-label="Adobe Reader">
        <svg viewBox="0 0 34 34"><path d="M3 4H32V30H3Z" fill="#c4100e" stroke="#780000" /><path d="M17 8Q15 18 9 25Q6 28 8 25Q15 19 27 20Q30 22 27 22Q18 19 17 8Z" fill="none" stroke="#fff" stroke-width="2" /></svg>
      </button>
      <div class="tray">
        <span class="lang">HR</span>
        <svg class="up" viewBox="0 0 8 5"><path d="M0 5L4 0L8 5Z" fill="#fff" /></svg>
        <svg class="tray-icon" viewBox="0 0 16 16"><path d="M1 1H15V15H1Z" fill="#b8bebe" /><path d="M5 4Q2 8 5 11Q9 14 12 10Q13 6 10 4" fill="none" stroke="#fff" stroke-width="3" /></svg>
        <svg class="tray-icon" viewBox="0 0 16 16"><path d="M5 4H15V12H5ZM7 15H14M10 12V15M1 2V6H4V2M2 6V12H5" fill="none" stroke="#fff" stroke-width="1" /><path d="M1 1H4V5H1Z" fill="#fff" /></svg>
        <svg class="tray-icon" viewBox="0 0 16 16"><path d="M1 5H4L8 1V15L4 11H1Z" fill="#fff" /><path d="M10 5Q12 8 10 11M12 3Q16 8 12 13" fill="none" stroke="#fff" /></svg>
        <div class="clock"><span>15:40</span><span>26.2.2013.</span></div>
        <button type="button" class="peek" aria-label="Show desktop"></button>
      </div>
    </footer>
  </div>
</template>

<style>
body { margin: 0; overflow: hidden; }
</style>

<style scoped>
.desktop {
  display: flex;
  flex-direction: column;
  height: 100vh;
  overflow: hidden;
  background: #f0f0f0;
  color: #000;
  font: 12px/16px "Open Sans", "Noto Sans", sans-serif;
}
button { margin: 0; padding: 0; border: 0; background: none; color: inherit; font: inherit; }
h1, h2 { margin: 0; font: inherit; white-space: nowrap; }
svg { display: block; }

.titlebar {
  display: flex;
  flex: none;
  box-sizing: border-box;
  height: 22px;
  padding-right: 3px;
  border-bottom: 1px solid #2c3c44;
  background:
    linear-gradient(rgba(255, 255, 255, .1), rgba(255, 255, 255, 0)),
    linear-gradient(90deg, #9bb4bd 0, #b4cbd0 14%, #a9c2c8 30%, #7fa0a8 36%, #64858f 45%, #5f8790 54%, #4f7078 62%, #567782 66%, #3e5561 71%, #587680 76%, #46626e 83%, #62828c 89%, #3f5a63 100%);
}
.logo { width: 16px; height: 12px; margin: 5px 0 0; }
.titlebar h1 { flex: 1; margin: 3px 0 0 6px; }
.caption-buttons { display: flex; height: 17px; border: 1px solid #2d3c44; border-top: 0; border-radius: 0 0 5px 5px; overflow: hidden; }
.caption-buttons button { display: grid; place-items: center; width: 27px; border-right: 1px solid #2d3c44; background: linear-gradient(#b4c4ca, #7f98a0 45%, #4e6a74 50%, #81a0a8); }
.caption-buttons .close { width: 47px; border: 0; background: linear-gradient(#e0a090, #cf5c48 45%, #b32b14 50%, #d8623a); }
.caption-buttons svg, .win-buttons svg { width: 14px; height: 14px; }

.menubar { display: flex; flex: none; box-sizing: border-box; height: 21px; padding: 1px 0 0 7px; gap: 13px; border-bottom: 1px solid #a0a0a0; }
.menubar, .status, .tray { font-family: Roboto, "Noto Sans", sans-serif; }
.toolbar { display: flex; flex: none; box-sizing: border-box; height: 30px; padding: 3px 0 0 4px; border-top: 1px solid #fff; border-bottom: 1px solid #6c6c6c; }
.toolbar::before { content: ""; width: 1px; height: 22px; margin-right: 7px; background: #aaa; }
.group { display: flex; height: 22px; }
.group + .group { margin-left: 3px; padding-left: 4px; border-left: 1px solid #8c8c8c; }
.group:last-child { padding-right: 8px; border-right: 1px solid #999; }
.group button { display: grid; place-items: center; width: 23px; height: 22px; }
.group svg { width: 16px; height: 16px; overflow: visible; }
.letters { color: #999; font: 12px/16px "Liberation Sans", sans-serif; }
.letters.italic { font: italic bold 13px/16px "Liberation Serif", serif; }

.tabs { display: flex; flex: none; align-items: flex-end; box-sizing: border-box; height: 27px; padding: 1px 0 4px 2px; border-bottom: 1px solid #888; background: linear-gradient(#f0f0f0 22px, #888 22px, #888 23px, #fff 23px); font-size: 10px; }
.tabs button { display: flex; align-items: center; gap: 6px; box-sizing: border-box; height: 19px; padding: 0 5px 0 3px; border: 1px solid #888; border-left-color: #fff; background: linear-gradient(#f4f4f4 45%, #dedede 50%, #d4d4d4); white-space: nowrap; }
.tabs button.long { padding-right: 10px; }
.tabs button.active { height: 22px; padding: 0 12px 0 7px; border-color: #fff; background: #fff; }
.tabs svg { width: 16px; height: 16px; }

.mdi { display: flex; flex: 1; flex-direction: column; box-sizing: border-box; min-height: 0; padding: 1px 2px; background: #ababab; border-bottom: 1px solid #fff; }
.windows { display: flex; flex: 1; min-height: 0; }
.win { display: flex; flex-direction: column; box-sizing: border-box; min-width: 0; padding: 0 8px 8px; border: 1px solid #35414c; border-radius: 7px 7px 0 0; }
.schematic-win { flex: 733 1 0; background: linear-gradient(#bfcddd, #d7e4f2 30px); box-shadow: inset 1px 1px #eef4fa; }
.plot-win { flex: 593 1 0; border-color: #101820; background: linear-gradient(#96b3d2, #b9d1ea 30px); box-shadow: inset 1px 1px #dceaf6, inset -1px -1px #48c8dc; }
.win > header { display: flex; flex: none; align-items: center; height: 30px; padding-top: 5px; box-sizing: border-box; }
.win-icon { flex: none; width: 16px; height: 16px; }
.win h2 { flex: 1; margin-left: 4px; overflow: hidden; }
.schematic-win h2 { color: #56606c; }
.win-buttons { display: flex; gap: 3px; }
.win-buttons button { display: grid; place-items: center; box-sizing: border-box; width: 30px; height: 17px; border: 1px solid #8595a8; border-radius: 3px; background: rgba(255, 255, 255, .15); }
.plot-win .win-buttons button { border-color: #5f7894; background: linear-gradient(#c0d4e8, #a6bfd8 45%, #8fadcb 50%, #b0cae0); }
.plot-win .win-buttons .close { border-color: #5c1c14; background: linear-gradient(#e0a090, #cf6450 45%, #b83c24 50%, #d4643c); }

.pane { display: grid; flex: 1; grid-template-columns: 1fr 16px; grid-template-rows: 1fr 17px; min-height: 0; border: solid #6a7278; border-width: 1px 0 0 1px; background: #f0f0f0; }
.canvas { min-width: 0; min-height: 0; overflow: hidden; background: #c0c0c0; }
.schematic { width: 716px; height: 520px; font: 5px "Liberation Sans", Arial, sans-serif; }
.schematic text { fill: #000; stroke: #000; stroke-width: .3px; }
.schematic text.blue { fill: #1010c8; stroke: #1010c8; }
.wire { fill: none; stroke: #1010cc; stroke-width: 1px; shape-rendering: crispEdges; }
.sym path { fill: none; stroke: #10107c; stroke-width: 1px; }
.sym path.gap { fill: #c0c0c0; stroke: none; }
.sym path.solid { fill: #10107c; }
.source { fill: #c0c0c0; stroke: #10107c; }
.ground { fill: #c0c0c0; stroke: #1010cc; }
.node { fill: #1010cc; }

.vbar, .hbar { display: flex; min-width: 0; min-height: 0; background: #f0f0f0; }
.vbar { flex-direction: column; background: linear-gradient(90deg, #e4e4e4, #f4f4f4); }
.vbar button { display: grid; place-items: center; height: 18px; }
.hbar button { display: grid; place-items: center; width: 18px; }
.vbar button svg, .hbar button svg { width: 8px; height: 8px; }
.track { display: flex; flex: 1; }
.vbar .track { flex-direction: column; }
.thumb { display: grid; place-items: center; box-sizing: border-box; border: 1px solid #959595; border-radius: 2px; }
.thumb::after { content: ""; }
.vbar .thumb { flex: 437 1 0; background: linear-gradient(90deg, #f5f5f5 45%, #dadadc 50%, #cfcfd2); }
.vbar .thumb::after { width: 8px; height: 8px; background: repeating-linear-gradient(#666 0 1px, #fff 1px 3px); }
.vbar .rest { flex: 47 1 0; }
.hbar .thumb { flex: 566 1 0; background: linear-gradient(#f5f5f5 45%, #dadadc 50%, #cfcfd2); }
.hbar .thumb::after { width: 8px; height: 8px; background: repeating-linear-gradient(90deg, #666 0 1px, #fff 1px 3px); }
.hbar .rest { flex: 114 1 0; }
.grip { width: 16px; height: 17px; }

.plot-pane { flex: 1; min-height: 0; border-top: 1px solid #6a7278; border-right: 1px solid #fff; background: #000; }
.plot { width: 100%; height: 100%; font: 14px "Liberation Sans", Arial, sans-serif; }
.plot text { fill: #c0c0c0; }
.plot text.trace-name { fill: #20e020; font-size: 13px; font-weight: bold; }
.grid path { fill: none; stroke: #6c6c6c; stroke-width: 1px; stroke-dasharray: 4 3; shape-rendering: crispEdges; }
.axis path { fill: none; stroke: #b4b4b4; stroke-width: 1px; shape-rendering: crispEdges; }
.trace { fill: none; stroke: #18e018; stroke-width: 1px; }

.minimized { display: flex; flex: none; gap: 0; height: 26px; }
.mini { display: flex; align-items: center; box-sizing: border-box; width: 160px; padding: 0 4px 0 5px; border: 1px solid #4a5460; border-radius: 6px 6px 0 0; background: linear-gradient(#bccbdc, #d5e2f0); color: #56606c; box-shadow: inset 1px 1px #e8f0f8; }
.mini span { flex: 1; margin-left: 4px; }

.status { display: flex; flex: none; justify-content: space-between; box-sizing: border-box; height: 20px; padding: 2px 4px 0 2px; border-top: 1px solid #999; background: #f0edec; }

.taskbar {
  display: flex;
  flex: none;
  box-sizing: border-box;
  height: 40px;
  border-top: 1px solid #16262c;
  background:
    linear-gradient(rgba(255, 255, 255, .25), rgba(255, 255, 255, 0) 2px),
    linear-gradient(90deg, #31484a 0, #40595a 12%, #3c5555 18%, #4a6463 26%, #3c5455 36%, #4c6668 45%, #4a6668 50%, #63807f 54%, #4c6a68 57%, #6a868a 60%, #506e6c 64%, #3c5654 70%, #4d6a68 80%, #3e5a5a 88%, #34494c 100%);
}
.start { width: 52px; padding-left: 2px; margin-right: 8px; }
.start svg { width: 38px; height: 38px; margin: 0 auto; }
.task { display: grid; place-items: center; box-sizing: border-box; width: 58px; margin-right: 4px; border: 1px solid transparent; }
.task svg { width: 32px; height: 32px; }
.task.open { border-color: rgba(210, 225, 225, .7); border-radius: 3px; background: linear-gradient(150deg, rgba(255, 255, 255, .45), rgba(255, 255, 255, .12) 50%, rgba(255, 255, 255, .2)); box-shadow: 0 0 0 1px #243438; }
.task.current { background: linear-gradient(150deg, #e8eeee, #b0bcbc 50%, #c8d2d2); }
.task.stack { width: 54px; box-shadow: 1px 0 #243438, 4px 0 rgba(170, 190, 190, .7), 5px 0 #243438; }
.task.mail { margin-left: 4px; }
.tray { display: flex; align-items: center; margin-left: auto; color: #fff; }
.lang { margin-right: 16px; }
.up { width: 8px; height: 5px; margin-right: 12px; }
.tray-icon { width: 16px; height: 16px; margin-right: 8px; }
.clock { display: flex; flex-direction: column; align-items: center; width: 64px; line-height: 17px; text-align: center; margin-right: 4px; }
.peek { align-self: stretch; width: 13px; border: 1px solid rgba(190, 210, 210, .6); background: linear-gradient(150deg, rgba(255, 255, 255, .35), rgba(0, 0, 0, .15)); }
</style>
